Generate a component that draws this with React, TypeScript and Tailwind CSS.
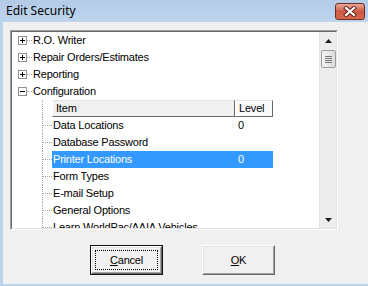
import React from 'react';

type Child = { name: string; level?: string; selected?: boolean };

const topItems = ['R.O. Writer', 'Repair Orders/Estimates', 'Reporting'];

const children: Child[] = [
  { name: 'Data Locations', level: '0' },
  { name: 'Database Password' },
  { name: 'Printer Locations', level: '0', selected: true },
  { name: 'Form Types' },
  { name: 'E-mail Setup' },
  { name: 'General Options' },
  { name: 'Learn WorldPac/AAIA Vehicles' },
];

function ExpandBox({ open }: { open?: boolean }) {
  return (
    <svg width="9" height="9" viewBox="0 0 9 9" className="shrink-0">
      <rect x="0.5" y="0.5" width="8" height="8" fill="#fff" stroke="#919191" />
      <path d="M2 4.5h5" stroke="#000" />
      {!open && <path d="M4.5 2v5" stroke="#000" />}
    </svg>
  );
}

function TopRow({ label, open }: { label: string; open?: boolean }) {
  return (
    <div className="h-[17px] flex items-center pl-[6px] shrink-0">
      <ExpandBox open={open} />
      <div className="w-[5px] border-t border-dotted border-[#a0a0a0]" />
      <span className="pl-[1px] whitespace-nowrap">{label}</span>
    </div>
  );
}

function Connector({ branch = true }: { branch?: boolean }) {
  return (
    <div className="w-[10px] self-stretch border-l border-dotted border-[#a0a0a0] flex items-center shrink-0">
      {branch && <div className="w-full border-t border-dotted border-[#a0a0a0]" />}
    </div>
  );
}

function Scrollbar() {
  return (
    <div className="w-[17px] h-full bg-[#ededed] border-l border-[#e4e4e4] flex flex-col items-center shrink-0">
      {/* up arrow */}
      <div className="h-[17px] w-full flex items-center justify-center">
        <svg width="7" height="4" viewBox="0 0 7 4">
          <path d="M3.5 0L7 4H0z" fill="#1e1e1e" />
        </svg>
      </div>
      {/* thumb */}
      <div className="mt-[1px] w-[15px] h-[18px] rounded-[2px] border border-[#9c9c9c] bg-gradient-to-r from-[#f4f4f4] to-[#dcdcdc] flex flex-col items-center justify-center gap-[1px]">
        <div className="w-[7px] h-[1px] bg-[#7a7a7a]" />
        <div className="w-[7px] h-[1px] bg-[#7a7a7a]" />
        <div className="w-[7px] h-[1px] bg-[#7a7a7a]" />
        <div className="w-[7px] h-[1px] bg-[#7a7a7a]" />
      </div>
      <div className="flex-1" />
      {/* down arrow */}
      <div className="h-[17px] w-full flex items-center justify-center">
        <svg width="7" height="4" viewBox="0 0 7 4">
          <path d="M0 0H7L3.5 4z" fill="#1e1e1e" />
        </svg>
      </div>
    </div>
  );
}

function ClassicButton({ label, hotkey, isDefault }: { label: string; hotkey: string; isDefault?: boolean }) {
  const rest = label.slice(1);
  const inner = (
    <div className="h-full w-full border border-t-white border-l-white border-b-[#696969] border-r-[#696969]">
      <div className="h-full w-full border border-t-[#e3e3e3] border-l-[#e3e3e3] border-b-[#a0a0a0] border-r-[#a0a0a0] bg-[#f0f0f0] flex items-center justify-center p-[2px]">
        <div
          className={
            isDefault
              ? 'h-full w-full border border-dotted border-black flex items-center justify-center'
              : 'h-full w-full flex items-center justify-center'
          }
        >
          <span>
            <span className="underline underline-offset-[1px]">{hotkey}</span>
            {rest}
          </span>
        </div>
      </div>
    </div>
  );
  return (
    <div className={isDefault ? 'w-[73px] h-[30px] border border-[#1a0d0d]' : 'w-[73px] h-[30px]'}>{inner}</div>
  );
}

export default function App() {
  return (
    <div className="w-[368px] h-[286px] bg-[#bcd3ec] flex flex-col overflow-hidden font-['Liberation_Sans',Arial,sans-serif] text-[11px] tracking-[-0.2px] text-black">
      {/* Title bar */}
      <div className="h-[22px] flex items-center justify-between pl-[6px] pr-[3px] bg-gradient-to-b from-[#b3cbe8] to-[#bdd4ec] shrink-0">
        <span className="font-['Noto_Sans',sans-serif] text-[12px] tracking-normal">Edit Security</span>
        <div className="w-[30px] h-[17px] rounded-[3px] border border-[#6e2a22] bg-gradient-to-b from-[#e9a899] via-[#cf5a44] to-[#d6664c] flex items-center justify-center">
          <svg width="14" height="11" viewBox="0 0 14 11">
            <path d="M3 2L11 9M11 2L3 9" stroke="#5c2218" strokeWidth="4" strokeLinecap="square" />
            <path d="M3 2L11 9M11 2L3 9" stroke="#fff" strokeWidth="2.2" strokeLinecap="square" />
          </svg>
        </div>
      </div>

      {/* Client area */}
      <div className="flex-1 ml-[3px] mb-[2px] bg-[#f0f0f0] flex flex-col">
        {/* Tree view */}
        <div className="ml-[7px] mt-[8px] w-[328px] h-[200px] border border-t-[#a0a0a0] border-l-[#a0a0a0] border-b-white border-r-white shrink-0">
          <div className="h-full w-full border border-t-[#696969] border-l-[#696969] border-b-[#e3e3e3] border-r-[#e3e3e3] bg-white flex">
            <div className="flex-1 overflow-hidden flex flex-col">
              {topItems.map((t) => (
                <TopRow key={t} label={t} />
              ))}
              <TopRow label="Configuration" open />

              {/* column header */}
              <div className="h-[17px] flex pl-[30px] shrink-0">
                <Connector branch={false} />
                <div className="w-[183px] h-full bg-[#f0f0f0] border border-t-[#e3e3e3] border-l-white border-b-[#696969] border-r-[#696969] flex items-center pl-[3px]">
                  Item
                </div>
                <div className="w-[38px] h-full bg-[#fafafa] border border-t-[#e3e3e3] border-l-white border-b-[#696969] border-r-[#696969] flex items-center pl-[3px]">
                  Level
                </div>
              </div>

              {children.map((c) => (
                <div key={c.name} className="h-[17px] flex pl-[30px] shrink-0">
                  <Connector />
                  <div
                    className={
                      c.selected
                        ? 'w-[221px] h-full flex items-center bg-[#3399ff] text-white'
                        : 'w-[221px] h-full flex items-center'
                    }
                  >
                    <span className="w-[183px] pl-[1px] whitespace-nowrap">{c.name}</span>
                    <span className="pl-[3px]">{c.level ?? ''}</span>
                  </div>
                </div>
              ))}
            </div>
            <Scrollbar />
          </div>
        </div>

        {/* Buttons */}
        <div className="mt-[15px] pl-[87px] flex gap-[39px]">
          <ClassicButton label="Cancel" hotkey="C" isDefault />
          <ClassicButton label="OK" hotkey="O" />
        </div>
      </div>
    </div>
  );
}
